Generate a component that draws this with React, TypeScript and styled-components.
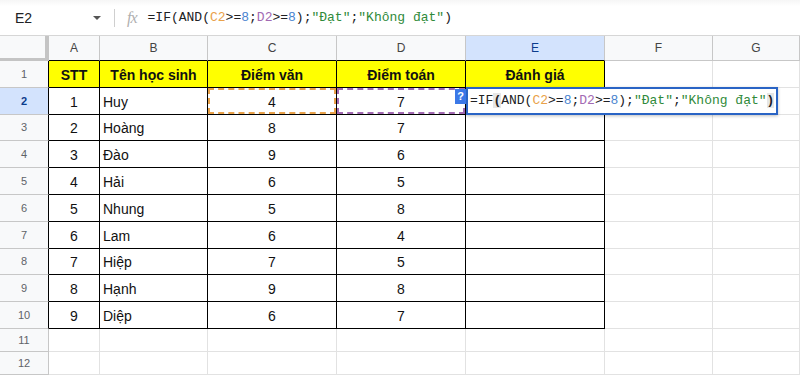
import React from 'react';
import styled, { createGlobalStyle } from 'styled-components';

const GlobalStyle = createGlobalStyle`
    html, body {
        margin: 0;
        padding: 0;
        background: #ffffff;
        font-family: "Liberation Sans", Arial, sans-serif;
    }
`;

const color = {
    text: '#202124',
    ref1: '#e9a24a',
    ref2: '#a26ab3',
    num: '#4a84cf',
    str: '#2f8a3a',
    grid: '#e2e2e2',
    headBorder: '#c7c7c7',
    headBg: '#f8f9fa',
    selBg: '#d3e3fd',
    selText: '#0b3c8c',
    blue: '#2a64c5',
};

const FORMULA = [
    { t: '=IF' },
    { t: '(', hl: true },
    { t: 'AND(' },
    { t: 'C2', c: color.ref1 },
    { t: '>=' },
    { t: '8', c: color.num },
    { t: ';' },
    { t: 'D2', c: color.ref2 },
    { t: '>=' },
    { t: '8', c: color.num },
    { t: ');' },
    { t: '"Đạt"', c: color.str },
    { t: ';' },
    { t: '"Không đạt"', c: color.str },
    { t: ')', hl: true },
];

const COLUMNS = ['A', 'B', 'C', 'D', 'E', 'F', 'G'];

const DATA = [
    ['STT', 'Tên học sinh', 'Điểm văn', 'Điểm toán', 'Đánh giá'],
    ['1', 'Huy', '4', '7', ''],
    ['2', 'Hoàng', '8', '7', ''],
    ['3', 'Đào', '9', '6', ''],
    ['4', 'Hải', '6', '5', ''],
    ['5', 'Nhung', '5', '8', ''],
    ['6', 'Lam', '6', '4', ''],
    ['7', 'Hiệp', '7', '5', ''],
    ['8', 'Hạnh', '9', '8', ''],
    ['9', 'Diệp', '6', '7', ''],
];

const FormulaText = ({ editing = false }) => (
    <>
        {FORMULA.map((part, i) => (
            <Token key={i} $color={part.c} $hl={editing && part.hl}>
                {part.t}
            </Token>
        ))}
    </>
);

const TopBar = () => (
    <Bar>
        <NameBox>E2</NameBox>
        <Caret />
        <Divider />
        <Fx>fx</Fx>
        <FormulaLine>
            <FormulaText />
        </FormulaLine>
    </Bar>
);

const DataRow = ({ row, index }) => {
    const head = index === 0;
    const selected = index === 1;
    return (
        <>
            <RowHead $selected={selected} $edge>
                {index + 1}
            </RowHead>
            {row.map((value, c) => (
                <Cell key={c} $table $head={head} $align={c === 1 && !head ? 'left' : 'center'}>
                    {value}
                    {selected && c === 2 && <Marching $color={color.ref1} />}
                    {selected && c === 3 && <Marching $color={color.ref2} />}
                    {selected && c === 4 && (
                        <Editor>
                            <Help>?</Help>
                            <FormulaText editing />
                        </Editor>
                    )}
                </Cell>
            ))}
            <Cell />
            <Cell />
        </>
    );
};

const EmptyRow = ({ number }) => (
    <>
        <RowHead>{number}</RowHead>
        {COLUMNS.map((c) => (
            <Cell key={c} />
        ))}
    </>
);

const App = () => (
    <>
        <GlobalStyle />
        <Page>
            <TopBar />
            <Sheet>
                <Corner />
                {COLUMNS.map((c, i) => (
                    <ColHead key={c} $selected={c === 'E'} $table={i < 5}>
                        {c}
                    </ColHead>
                ))}
                {DATA.map((row, i) => (
                    <DataRow key={i} row={row} index={i} />
                ))}
                <EmptyRow number={11} />
                <EmptyRow number={12} />
            </Sheet>
        </Page>
    </>
);

const Page = styled.div`
    width: 800px;
    height: 375px;
    overflow: hidden;
    background: #fff;
`;

const Bar = styled.div`
    height: 35px;
    display: flex;
    align-items: center;
    border-bottom: 1px solid #d6d6d6;
    background: linear-gradient(#f6f6f6 0, #ffffff 6px);
`;

const NameBox = styled.div`
    width: 78px;
    padding-left: 15px;
    font-size: 14px;
    color: ${color.text};
`;

const Caret = styled.div`
    width: 0;
    height: 0;
    border-left: 4px solid transparent;
    border-right: 4px solid transparent;
    border-top: 4px solid #555;
`;

const Divider = styled.div`
    width: 1px;
    height: 18px;
    background: #cfcfcf;
    margin-left: 13px;
`;

const Fx = styled.div`
    margin-left: 12px;
    font-family: "Liberation Serif", serif;
    font-style: italic;
    font-size: 16px;
    color: #b0b0b0;
    letter-spacing: -1px;
`;

const FormulaLine = styled.div`
    margin-left: 11px;
    font-family: "Liberation Mono", monospace;
    font-size: 13px;
    color: ${color.text};
    white-space: pre;
`;

const Token = styled.span`
    color: ${(p) => p.$color || 'inherit'};
    font-weight: ${(p) => (p.$hl ? 'bold' : 'normal')};
    background: ${(p) => (p.$hl ? '#e6e6e6' : 'transparent')};
`;

const Sheet = styled.div`
    display: grid;
    grid-template-columns: 49px 51px 108px 129px 129px 139px 108px 1fr;
    grid-template-rows: 25px repeat(10, 26.8px) 23px 23px;
`;

const Corner = styled.div`
    background: ${color.headBg};
    border-right: 4px solid #c4c4c4;
    border-bottom: 3px solid #c4c4c4;
`;

const ColHead = styled.div`
    display: flex;
    align-items: center;
    justify-content: center;
    font-size: 12px;
    color: ${(p) => (p.$selected ? color.selText : '#444')};
    background: ${(p) => (p.$selected ? color.selBg : color.headBg)};
    border-right: 1px solid ${color.headBorder};
    border-bottom: 1px solid ${(p) => (p.$table ? '#000' : color.headBorder)};
`;

const RowHead = styled.div`
    display: flex;
    align-items: center;
    justify-content: center;
    font-size: 11px;
    font-weight: ${(p) => (p.$selected ? 'bold' : 'normal')};
    color: ${(p) => (p.$selected ? color.selText : '#5f6368')};
    background: ${(p) => (p.$selected ? color.selBg : color.headBg)};
    border-right: 1px solid ${(p) => (p.$edge ? '#000' : color.headBorder)};
    border-bottom: 1px solid ${color.headBorder};
`;

const Cell = styled.div`
    position: relative;
    display: flex;
    align-items: center;
    justify-content: ${(p) => (p.$align === 'left' ? 'flex-start' : 'center')};
    padding: 2px 3px 0;
    font-size: 14px;
    font-weight: ${(p) => (p.$head ? 'bold' : 'normal')};
    color: #111;
    white-space: nowrap;
    background: ${(p) => (p.$head ? '#ffff00' : '#fff')};
    border-right: 1px solid ${(p) => (p.$table ? '#000' : color.grid)};
    border-bottom: 1px solid ${(p) => (p.$table ? '#000' : color.grid)};
    min-width: 0;
`;

const Marching = styled.div`
    position: absolute;
    inset: 0;
    border: 2px dashed ${(p) => p.$color};
    pointer-events: none;
`;

const Editor = styled.div`
    position: absolute;
    top: -1px;
    left: 0;
    width: 306px;
    height: 24px;
    display: flex;
    align-items: center;
    padding-left: 2px;
    border: 2px solid ${color.blue};
    background: #fff;
    box-shadow: 0 1px 3px rgba(0, 0, 0, 0.25);
    font-family: "Liberation Mono", monospace;
    font-size: 13px;
    color: ${color.text};
    white-space: pre;
    z-index: 2;
`;

const Help = styled.div`
    position: absolute;
    left: -13px;
    top: 0;
    width: 11px;
    height: 15px;
    display: flex;
    align-items: center;
    justify-content: center;
    background: #3b78e7;
    color: #fff;
    font-family: "Liberation Sans", Arial, sans-serif;
    font-weight: bold;
    font-size: 11px;
`;

export default App;
